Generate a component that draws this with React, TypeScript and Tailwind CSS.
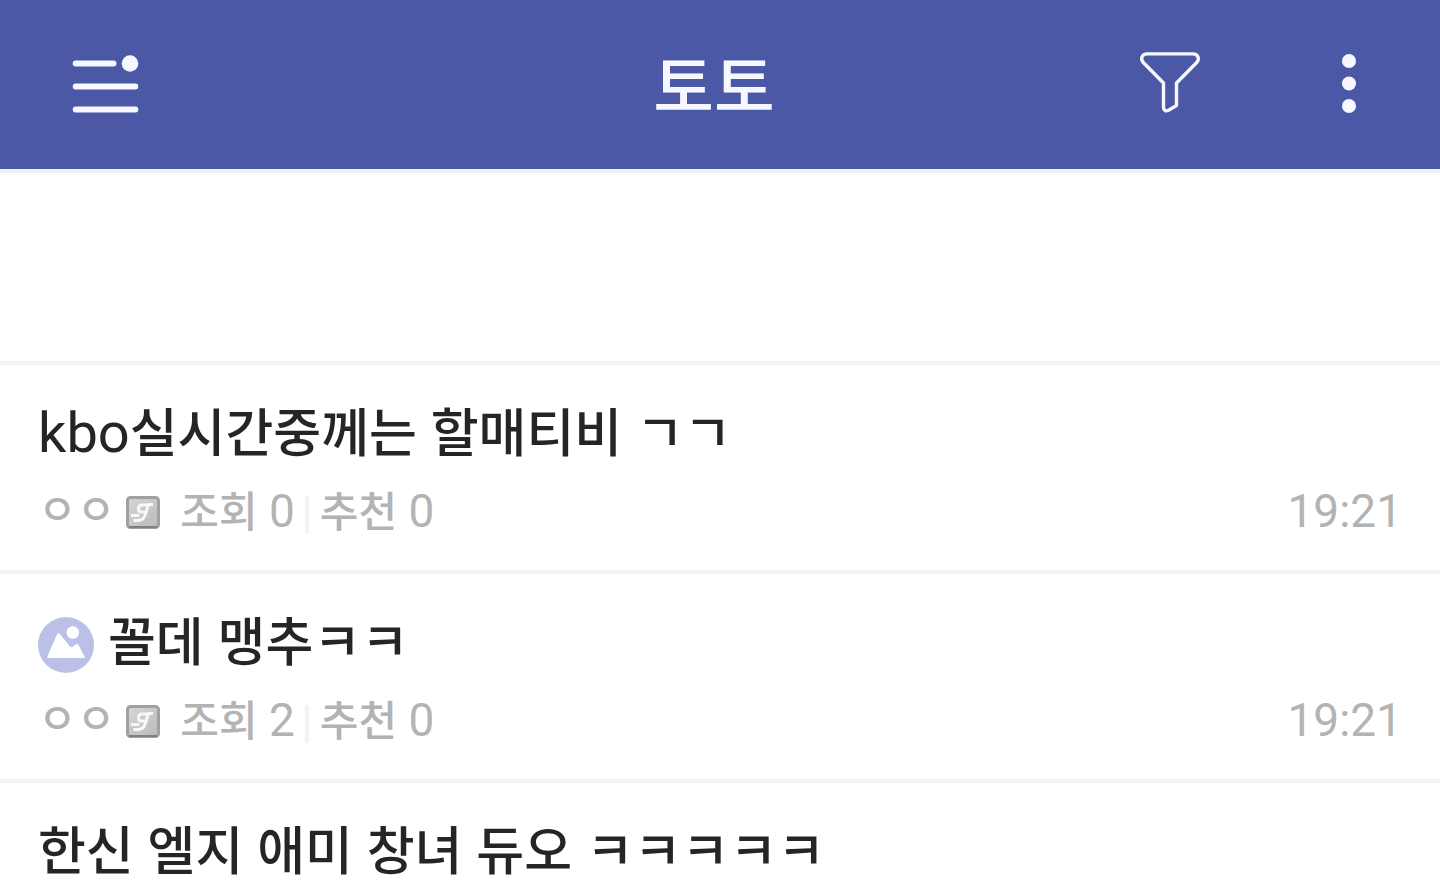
type Post = {
  id: number;
  title: string;
  author: string;
  views: number;
  likes: number;
  time: string;
  hasImage?: boolean;
};

const posts: Post[] = [
  { id: 1, title: "kbo실시간중께는 할매티비 ㄱㄱ", author: "ㅇㅇ", views: 0, likes: 0, time: "19:21" },
  { id: 2, title: "꼴데 맹추ㅋㅋ", author: "ㅇㅇ", views: 2, likes: 0, time: "19:21", hasImage: true },
  { id: 3, title: "한신 엘지 애미 창녀 듀오 ㅋㅋㅋㅋㅋ", author: "ㅇㅇ", views: 0, likes: 0, time: "19:21" },
];

// Hangul is set a little smaller than the Latin text beside it
const Mixed = ({ text, hangul }: { text: string; hangul: string }) => (
  <>
    {text.split(/([ㄱ-ㅎ가-힣]+)/).map((part, i) =>
      i % 2 ? <span key={i} className={hangul}>{part}</span> : part
    )}
  </>
);

const MenuIcon = () => (
  <svg width="68" height="60" viewBox="0 0 68 60" stroke="#f7f8ff" strokeWidth="6" strokeLinecap="round" aria-hidden="true">
    <path d="M3.700 8.500H41.500M3.700 31.500H63.300M3.700 54.500H63.300" />
    <circle cx="58" cy="8.500" r="8.300" fill="#f7f8ff" stroke="none" />
  </svg>
);

const FilterIcon = () => (
  <svg width="60" height="66" viewBox="0 0 60 66" fill="none" stroke="#f7f8ff" strokeWidth="3.400" strokeLinejoin="round" aria-hidden="true">
    <path d="M7 1.900H53C58 1.900 60 7.200 56.500 10.700L36.500 31V53.500L28.500 58.300C26 59.600 23.500 58.300 23.500 55.300V31L3.500 10.700C0 7.200 2 1.900 7 1.900Z" />
  </svg>
);

const MoreIcon = () => (
  <svg width="14" height="62" viewBox="0 0 14 62" fill="#f7f8ff" aria-hidden="true">
    <circle cx="7" cy="7" r="7" />
    <circle cx="7" cy="29.500" r="7" />
    <circle cx="7" cy="52" r="7" />
  </svg>
);

const ImageIcon = () => (
  <svg className="mt-1 shrink-0" width="56" height="56" viewBox="0 0 56 56" role="img" aria-label="이미지">
    <circle cx="28" cy="28" r="28" fill="#bbc1e6" />
    <circle cx="34.800" cy="15.500" r="6.300" fill="#fff" />
    <path d="M9.300 39.500L19 17.500Q20.500 15.200 22.200 17.500L32 29.500Q33.500 31 35 29.500L37 27.800Q39 26.200 40.500 28L46.600 39.500Q47 41 45.500 41H10.500Q9 41 9.300 39.500Z" fill="#fff" />
  </svg>
);

const BadgeIcon = () => (
  <svg className="mt-1 mr-5 ml-[11px] shrink-0" width="34" height="34" viewBox="0 0 34 34" aria-hidden="true">
    <defs>
      <linearGradient id="badge" x1="0" y1="0" x2="1" y2="1">
        <stop offset="0" stopColor="#d6d6d6" />
        <stop offset="1" stopColor="#bababa" />
      </linearGradient>
    </defs>
    <rect x="1.500" y="1.500" width="31" height="30" rx="3" fill="url(#badge)" stroke="#a0a0a0" strokeWidth="3" />
    <path d="M3 31H31" stroke="#808080" strokeWidth="2" />
    <path d="M27 8.500H22.500L19.500 18Q17.500 24.500 12.500 24.500H7.500M5 19.500H13.500" fill="none" stroke="#f8f8f8" strokeWidth="3" />
    <path d="M21 9H16Q12.500 9 12.500 13Q12.500 16 15.500 16H19.500" fill="none" stroke="#f8f8f8" strokeWidth="3" />
  </svg>
);

const PostRow = ({ post }: { post: Post }) => (
  <li className="border-b-4 border-[#f3f3f3] px-[38px] pt-[34px] pb-[29px]">
    <a href={`#post-${post.id}`} className="block">
      <h2 className="flex items-center gap-[14px] text-[56px] leading-[69px] text-[#252525]">
        {post.hasImage && <ImageIcon />}
        <span className="whitespace-pre">
          <Mixed text={post.title} hangul="text-[52px] leading-none font-medium" />
        </span>
      </h2>
      <div className="mt-[13px] flex items-center text-[46px] leading-[60px] text-[#b3b3b3]">
        <span className="text-[42px] font-medium">{post.author}</span>
        <BadgeIcon />
        <span className="whitespace-pre">
          <Mixed text={`조회 ${post.views}`} hangul="text-[42px] leading-none font-medium" />
        </span>
        <span className="mt-2 mr-[11px] ml-[10px] h-[38px] w-1 bg-[#f3f3f3]" />
        <span className="whitespace-pre">
          <Mixed text={`추천 ${post.likes}`} hangul="text-[42px] leading-none font-medium" />
        </span>
        <time className="ml-auto">{post.time}</time>
      </div>
    </a>
  </li>
);

const App = () => {
  return (
    <div className="h-screen overflow-hidden bg-white font-[Roboto,'Noto_Sans_CJK_KR',sans-serif]">
      <header className="flex h-[173px] items-center border-b-4 border-[#f0f3ff] bg-[#4b58a6] pr-[84px] pl-[72px] text-[#f7f8ff]">
        <div className="flex flex-1">
          <button type="button" aria-label="메뉴">
            <MenuIcon />
          </button>
        </div>
        <h1 className="pt-2 text-[66px] leading-[80px] font-medium">토토</h1>
        <div className="flex flex-1 items-center justify-end gap-[142px]">
          <button type="button" aria-label="필터">
            <FilterIcon />
          </button>
          <button type="button" aria-label="더보기">
            <MoreIcon />
          </button>
        </div>
      </header>
      <main>
        <div className="h-48 border-b-4 border-[#f3f3f3]" />
        <ul>
          {posts.map((post) => (
            <PostRow key={post.id} post={post} />
          ))}
        </ul>
      </main>
    </div>
  );
};

export default App;
